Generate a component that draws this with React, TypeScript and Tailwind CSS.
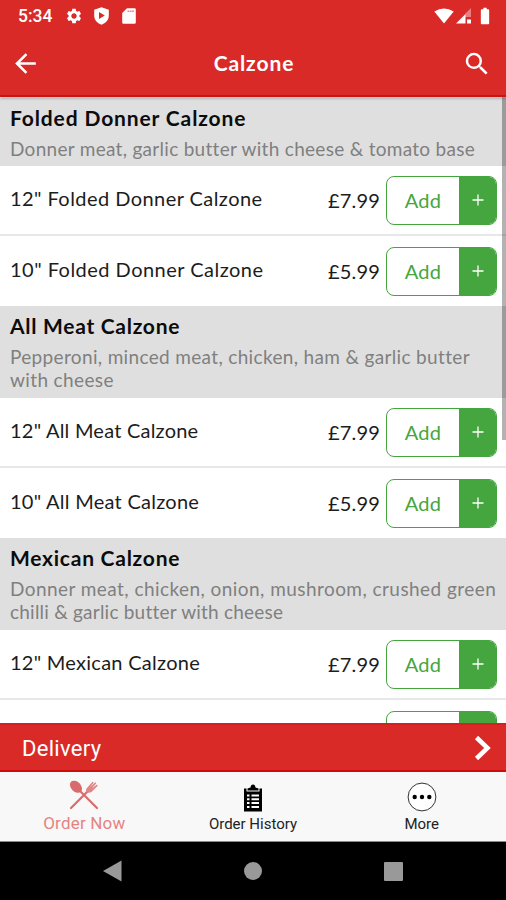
import React from "react";
import {
  MdArrowBack,
  MdBatteryFull,
  MdSearch,
  MdSettings,
} from "react-icons/md";

interface Item {
  name: string;
  price: string;
  spacing: string;
}

interface Section {
  title: string;
  titleSpacing: string;
  lines: { text: string; spacing: string }[];
  items: Item[];
}

const sections: Section[] = [
  {
    title: "Folded Donner Calzone",
    titleSpacing: "tracking-[0.87px]",
    lines: [
      {
        text: "Donner meat, garlic butter with cheese & tomato base",
        spacing: "tracking-[0.29px]",
      },
    ],
    items: [
      { name: '12" Folded Donner Calzone', price: "£7.99", spacing: "tracking-[0.44px]" },
      { name: '10" Folded Donner Calzone', price: "£5.99", spacing: "tracking-[0.48px]" },
    ],
  },
  {
    title: "All Meat Calzone",
    titleSpacing: "tracking-[0.72px]",
    lines: [
      {
        text: "Pepperoni, minced meat, chicken, ham & garlic butter",
        spacing: "tracking-[0.34px]",
      },
      { text: "with cheese", spacing: "tracking-[0.37px]" },
    ],
    items: [
      { name: '12" All Meat Calzone', price: "£7.99", spacing: "tracking-[0.22px]" },
      { name: '10" All Meat Calzone', price: "£5.99", spacing: "tracking-[0.26px]" },
    ],
  },
  {
    title: "Mexican Calzone",
    titleSpacing: "tracking-[0.75px]",
    lines: [
      {
        text: "Donner meat, chicken, onion, mushroom, crushed green",
        spacing: "tracking-[0.44px]",
      },
      {
        text: "chilli & garlic butter with cheese",
        spacing: "tracking-[0.22px]",
      },
    ],
    items: [
      { name: '12" Mexican Calzone', price: "£7.99", spacing: "tracking-[0.27px]" },
    ],
  },
];

const StatusBar = () => (
  <div className="flex h-8 items-center justify-between pl-[18px] pr-[14px] text-white">
    <div className="flex items-center">
      <span className="w-[47px] font-['Roboto',sans-serif] text-[17.500px] font-medium">
        5:34
      </span>
      <MdSettings size={18} />
      <svg className="ml-[10px]" width="17" height="18" viewBox="0 0 17 18">
        <path
          fillRule="evenodd"
          fill="currentColor"
          d="M8.500 .3 L15.800 2.800 V8.500 C15.800 13 12.800 16.300 8.500 17.700 C4.200 16.300 1.200 13 1.200 8.500 V2.800 Z M6 5 V12 L11.800 8.500 Z"
        />
      </svg>
      <svg className="ml-[12px]" width="14" height="16" viewBox="0 0 14 16">
        <path
          fill="currentColor"
          d="M5 .3 H12.500 A1.300 1.300 0 0 1 13.800 1.600 V14.400 A1.300 1.300 0 0 1 12.500 15.700 H1.500 A1.300 1.300 0 0 1 .2 14.400 V5 Z"
        />
        <path stroke="#e58a88" strokeWidth="1.500" d="M5.500 3.200 H12" strokeDasharray="1.800 .5" />
      </svg>
    </div>
    <div className="flex items-center pb-[1px]">
      <svg width="20" height="16" viewBox="0 0 20 16">
        <path fill="currentColor" d="M.3 3.500 Q10 -2.600 19.700 3.500 L10 15.500 Z" />
      </svg>
      <svg className="ml-[2px]" width="16" height="16" viewBox="0 0 16 16">
        <path fill="currentColor" opacity=".4" d="M9 6 L15 0 V9 H9 Z" />
        <path fill="currentColor" d="M0 15.500 L9.500 6 V15.500 Z M11 11.500 H15 V15.500 H11 Z" />
      </svg>
      <MdBatteryFull className="ml-[3px] -mr-[3px]" size={20} />
    </div>
  </div>
);

const AddButton: React.FC<{ label?: string }> = ({ label = "Add" }) => (
  <button className="mt-[1px] flex h-[49px] w-[111px] shrink-0 overflow-hidden rounded-[8px] border border-[#45a63f] text-[20px]">
    <span className="flex flex-1 items-center justify-center pb-[1px] tracking-[0.3px] text-[#45a63f]">
      {label}
    </span>
    <span className="flex w-[37px] items-center justify-center bg-[#45a63f] text-white">
      <svg width="12" height="12" viewBox="0 0 12 12">
        <path stroke="currentColor" strokeWidth="1.300" d="M6 .5 V11.500 M.5 6 H11.500" />
      </svg>
    </span>
  </button>
);

const MenuSection: React.FC<{ section: Section }> = ({ section }) => (
  <section>
    <div className="bg-[#dfdfdf] px-[10px] pt-[6px] pb-[6px]">
      <h2
        className={`text-[21px] leading-[27px] font-bold text-[#0c0c0c] ${section.titleSpacing}`}
      >
        {section.title}
      </h2>
      <div className="pt-[6px] text-[19px] leading-[23.400px] text-[#808080]">
        {section.lines.map((line) => (
          <p key={line.text} className={`whitespace-nowrap ${line.spacing}`}>
            {line.text}
          </p>
        ))}
      </div>
    </div>
    {section.items.map((item, i) => (
      <div
        key={item.name}
        className={`flex h-[70px] items-center bg-white pr-[9px] pl-[10px] text-[20px] text-[#1c1c1c] ${
          i === 0 ? "border-b-2 border-[#e8e8e8]" : ""
        }`}
      >
        <span className={`flex-1 whitespace-nowrap pb-[3px] ${item.spacing}`}>
          {item.name}
        </span>
        <span className="mr-[6px] tracking-[0.2px]">{item.price}</span>
        <AddButton />
      </div>
    ))}
  </section>
);

const CutleryIcon = () => (
  <svg width="30" height="30" viewBox="0 0 30 30" fill="none">
    <path stroke="#d96b6c" strokeWidth="2.200" strokeLinecap="round" d="M10 10 L28 28 M2 28 L20 10" />
    <ellipse cx="7" cy="6.800" rx="7" ry="4.900" transform="rotate(45 7 6.800)" fill="#d96b6c" />
    <path
      fill="#e08586"
      d="M17.500 8.500 L23.500 1.800 L24.800 2.600 L21.200 7.200 L26.300 2.300 L27.300 3.300 L22.800 8.500 L28 4.500 L28.800 5.800 L22.500 12 Q19.500 13.500 17.500 12 Q16.500 10.500 17.500 8.500 Z"
    />
  </svg>
);

const ClipboardIcon = () => (
  <svg width="20" height="28" viewBox="0 0 20 28">
    <path
      fill="#000"
      d="M1 4.500 H3.500 V7.500 H16.500 V4.500 H19 V27.500 H1 Z M4.500 6.500 V4.500 L7.500 3.500 Q7.800 .5 10 .5 Q12.200 .5 12.500 3.500 L15.500 4.500 V6.500 Z"
    />
    <path
      stroke="#fff"
      strokeWidth="2"
      d="M4 11.500 H6.500 M8.500 11.500 H16 M4 15.300 H6.500 M8.500 15.300 H16 M4 19.100 H6.500 M8.500 19.100 H16 M4 22.900 H6.500 M8.500 22.900 H16"
    />
  </svg>
);

const MoreIcon = () => (
  <svg width="30" height="30" viewBox="0 0 30 30">
    <circle cx="15" cy="15" r="13.900" fill="#fff" stroke="#333" strokeWidth="1" />
    <circle cx="7.700" cy="15" r="2.200" />
    <circle cx="15" cy="15" r="2.200" />
    <circle cx="22.300" cy="15" r="2.200" />
  </svg>
);

const TabBar = () => (
  <nav className="grid h-[70px] grid-cols-3 border-b border-[#8a8a8a] bg-[#f8f8f8] font-['Roboto',sans-serif] text-[#222]">
    <a className="flex flex-col items-center pt-[8px]">
      <CutleryIcon />
      <span className="text-[17px] leading-[26px] tracking-[0.2px] text-[#e58383]">
        Order Now
      </span>
    </a>
    <a className="flex flex-col items-center pt-[12px]">
      <ClipboardIcon />
      <span className="text-[15px] leading-[25px]">Order History</span>
    </a>
    <a className="flex flex-col items-center pt-[10px]">
      <MoreIcon />
      <span className="text-[15px] leading-[25px]">More</span>
    </a>
  </nav>
);

const SystemNav = () => (
  <div className="flex h-[58px] items-center justify-center gap-[122px] bg-black">
    <svg width="19" height="22" viewBox="0 0 19 22">
      <path fill="#999" d="M0 11 L18.500 .5 V21.500 Z" />
    </svg>
    <div className="h-[18px] w-[18px] rounded-full bg-[#999]" />
    <div className="h-[19px] w-[19px] rounded-[1px] bg-[#999]" />
  </div>
);

export default function App() {
  return (
    <div className="flex h-[900px] w-[506px] flex-col overflow-hidden bg-white font-['Lato',sans-serif]">
      <header className="z-10 h-[97px] shrink-0 border-b-2 border-[#c91414] bg-[#d92a28] text-white shadow-[0_1px_3px_rgba(0,0,0,0.35)]">
        <StatusBar />
        <div className="grid h-[63px] grid-cols-3 items-center pr-[14px] pl-[10px]">
          <MdArrowBack size={31} />
          <h1 className="pb-[2px] pl-[6px] text-center text-[21px] font-bold tracking-[0.9px]">
            Calzone
          </h1>
          <MdSearch className="justify-self-end" size={30} />
        </div>
      </header>

      <main className="relative min-h-0 flex-1 overflow-hidden pt-[0.5px]">
        {sections.map((section) => (
          <MenuSection key={section.title} section={section} />
        ))}
        {/* top edge of the next row, still under the delivery bar */}
        <div className="flex h-[70px] items-center justify-end pr-[9px]">
          <AddButton label="" />
        </div>
        <div className="absolute top-0 right-0 h-[343px] w-[4px] bg-black/30" />
      </main>

      <button className="flex h-[49px] shrink-0 items-center justify-between border-y-2 border-t-[#d4201f] border-b-[#cc0d0d] bg-[#d92a28] pr-[14px] pl-[22px] text-white">
        <span className="pt-[1px] font-['Roboto',sans-serif] text-[22px] tracking-[0.3px]">
          Delivery
        </span>
        <svg width="18" height="26" viewBox="0 0 18 26" fill="none">
          <path stroke="currentColor" strokeWidth="4.500" d="M2.500 2.500 L13.500 13 L2.500 23.500" />
        </svg>
      </button>
      <TabBar />
      <SystemNav />
    </div>
  );
}
